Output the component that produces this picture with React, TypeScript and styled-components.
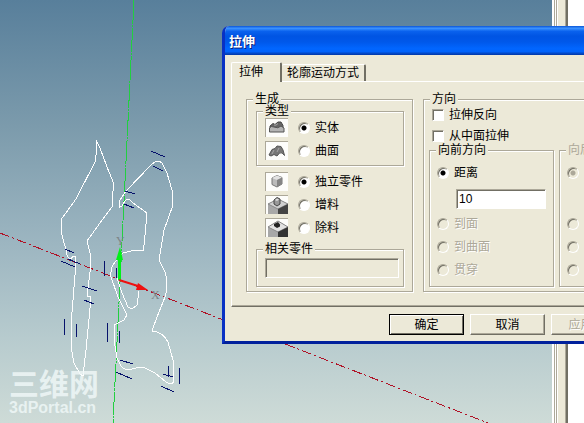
import React from 'react';
import styled, { createGlobalStyle, css } from 'styled-components';

const GlobalStyle = createGlobalStyle`
  *, *::before, *::after { box-sizing: border-box; }
  body {
    margin: 0;
    overflow: hidden;
    color: #000;
    font-family: 'Liberation Sans', 'Noto Sans CJK SC', sans-serif;
    font-size: 12px;
    line-height: 16px;
  }
`;

const face = '#ece9d8';
const shade = '#aca899';
const deep = '#716f64';

const Workspace = styled.main`
  position: relative;
  display: flex;
  min-height: 100vh;
  overflow: hidden;
`;

const Viewport = styled.section`
  position: relative;
  flex: 1;
  min-width: 0;
  background: linear-gradient(#587f9b 0%, #7c9bac 30%, #9db6c1 58%, #b7cbce 80%, #cedbd7 100%);
`;

const Sketch = styled.svg`
  display: block;
  width: 100%;
  height: 100vh;
`;

const Splitter = styled.div`
  width: 16px;
  background: linear-gradient(
    90deg,
    #fff 0 2px, #aca899 2px 3px, #fff 3px 4px, #aca899 4px 5px, #fff 5px 6px,
    ${face} 6px 13px, #aca899 13px 14px, #716f64 14px 16px
  );
`;

const SidePane = styled.aside`
  width: 16px;
  background: #fff;
`;

const Watermark = styled.div`
  position: absolute;
  left: 9px;
  bottom: 6px;
  display: flex;
  flex-direction: column;
  color: rgba(240, 248, 248, 0.82);
  font-weight: 700;
  white-space: nowrap;
`;

const WatermarkName = styled.span`
  font-size: 30px;
  line-height: 28px;
`;

const WatermarkSite = styled.span`
  font-size: 16px;
  line-height: 18px;
`;

const Dialog = styled.div`
  position: absolute;
  left: 222px;
  top: 26px;
  width: 492px;
  border: solid #0831c4;
  border-width: 0 3px 3px;
  border-bottom-color: #00209c;
  border-radius: 7px 7px 0 0;
  overflow: hidden;
  background: ${face};
`;

const TitleBar = styled.header`
  height: 29px;
  margin: 0 -3px;
  padding: 0 7px;
  background: linear-gradient(
    #0a55d8 0%, #3c93ff 8%, #0a62ee 18%, #0054e3 35%, #0058ea 55%, #0166ff 78%, #0163fb 88%, #0347c4 95%, #0137a8 100%
  );
`;

const Title = styled.h1`
  margin: 0;
  color: #fff;
  font-size: 13px;
  line-height: 31px;
  text-shadow: 1px 1px 0 #0a1e7a;
`;

const Content = styled.div`
  padding: 7px 6px 6px;
`;

const TabList = styled.div`
  display: flex;
  align-items: flex-end;
  height: 19px;
`;

const Tab = styled.button<{ $active?: boolean }>`
  height: 17px;
  padding: 0 5px;
  border: solid;
  border-width: 1px 2px 0 0;
  border-color: #fff ${deep} #fff #fff;
  border-radius: 2px 2px 0 0;
  background: ${face};
  color: #000;
  font: inherit;
  line-height: 16px;
  ${(p) => p.$active && css`
    position: relative;
    height: 20px;
    margin-bottom: -1px;
    padding: 0 17px 2px 7px;
    border-left-width: 1px;
  `}
`;

const Panel = styled.div`
  display: flex;
  align-items: stretch;
  gap: 10px;
  padding: 11px 14px 14px;
  border: 1px solid #fff;
  border-bottom-color: ${deep};
  box-shadow: 0 -1px 0 ${shade} inset;
`;

const Group = styled.fieldset<{ $disabled?: boolean }>`
  min-width: 0;
  margin: 0;
  padding: 0;
  border: 1px solid ${shade};
  box-shadow: 1px 1px 0 #fff, inset 1px 1px 0 #fff;
  color: ${(p) => (p.$disabled ? shade : '#000')};
`;

const Legend = styled.legend`
  margin-left: 6px;
  padding: 0 2px;
  background: ${face};
  line-height: 12px;
`;

const GenerateGroup = styled(Group)`
  width: 167px;
`;

const GenerateBody = styled.div`
  display: flex;
  flex-direction: column;
  gap: 6px;
  padding: 0 8px 4px 9px;
`;

const OptionList = styled.div<{ $inset?: boolean }>`
  display: flex;
  flex-direction: column;
  gap: 4px;
  padding: ${(p) => (p.$inset ? '1px 8px 5px' : '0 9px')};
`;

const OptionRow = styled.div`
  display: flex;
  align-items: center;
  gap: 10px;
  height: 19px;
`;

const IconTile = styled.svg`
  flex: none;
  width: 23px;
  height: 19px;
  border: solid;
  border-width: 1px 0 0 1px;
  border-color: ${shade};
  background: #fdfdfb;
`;

const Choice = styled.label<{ $muted?: boolean }>`
  display: flex;
  align-items: center;
  gap: 5px;
  height: 16px;
  color: ${(p) => (p.$muted ? shade : '#000')};
  text-shadow: ${(p) => (p.$muted ? '1px 1px 0 #fff' : 'none')};
  white-space: nowrap;
`;

const Radio = styled.input.attrs({ type: 'radio' })`
  appearance: none;
  flex: none;
  width: 12px;
  height: 12px;
  margin: 0;
  border: 1px solid;
  border-color: ${shade} #fff #fff ${shade};
  border-radius: 50%;
  background: #fff;
  box-shadow: inset 1px 1px 0 ${deep};
  &:checked {
    background: radial-gradient(circle at 5px 5px, #000 0 2px, #fff 3px);
  }
  &:disabled {
    background: ${face};
  }
  &:disabled:checked {
    background: radial-gradient(circle at 5px 5px, ${shade} 0 2px, ${face} 3px);
  }
`;

const Check = styled.input.attrs({ type: 'checkbox' })`
  appearance: none;
  width: 12px;
  height: 12px;
  margin: 0;
  border: 1px solid;
  border-color: ${shade} #fff #fff ${shade};
  background: #fff;
  box-shadow: inset 1px 1px 0 ${deep};
`;

const TextBox = styled.input.attrs({ type: 'text' })`
  display: block;
  width: 100%;
  height: 20px;
  margin: 0;
  padding: 0 2px;
  border: 1px solid;
  border-color: ${shade} #fff #fff ${shade};
  border-radius: 0;
  background: #fff;
  box-shadow: inset 1px 1px 0 ${deep};
  color: #000;
  font: inherit;
  &:disabled { background: ${face}; }
`;

const PartBody = styled.div`
  padding: 3px 4px 8px 8px;
`;

const DirectionGroup = styled(Group)`
  flex: 1;
`;

const DirectionBody = styled.div`
  padding: 2px 5px 4px;
`;

const CheckList = styled.div`
  display: flex;
  flex-direction: column;
  gap: 5px;
  padding-left: 3px;
`;

const Sides = styled.div`
  display: grid;
  grid-template-columns: 125px 125px;
  gap: 5px;
`;

const SideBody = styled.div`
  display: flex;
  flex-direction: column;
  gap: 7px;
  padding: 9px 7px 8px;
`;

const DistanceField = styled.div`
  height: 21px;
  padding: 1px 0 0 19px;
`;

const Footer = styled.footer`
  display: flex;
  gap: 6px;
  padding: 7px 0 0 158px;
`;

const PushButton = styled.button<{ $primary?: boolean }>`
  width: 75px;
  height: 21px;
  padding: 0;
  border: 1px solid;
  border-color: ${(p) => (p.$primary ? '#000' : `#fff ${deep} ${deep} #fff`)};
  border-radius: 0;
  background: ${face};
  box-shadow: ${(p) => (p.$primary ? `inset 1px 1px 0 #fff, inset -1px -1px 0 ${deep}` : `inset -1px -1px 0 ${shade}`)};
  color: #000;
  font: inherit;
  &:disabled {
    color: ${shade};
    text-shadow: 1px 1px 0 #fff;
  }
`;

const SolidIcon = () => (
  <IconTile viewBox="0 0 22 18" aria-hidden="true">
    <path d="M4 12V7L7 4.500L9 5.500L12 3H15L17 6.500V12Z" fill="#666" stroke="#444" />
    <path d="M3.500 9Q5 6.500 8 8Q12 10 15 7L18 9V13H3.500Z" fill="#b4b4b4" stroke="#555" />
    <path d="M8 6Q10 7 12 4.500" fill="none" stroke="#aaa" />
  </IconTile>
);

const SurfaceIcon = () => (
  <IconTile viewBox="0 0 22 18" aria-hidden="true">
    <path d="M3 13L6 7.500L9 6.500L11 4L15 4.500L17 8L18.500 13.500Q16 9.500 13.500 11L11 14L8 12.500L5 14Z" fill="#777" stroke="#555" />
    <path d="M6 12L8 8M13 6L11 10" stroke="#a8a8a8" fill="none" />
  </IconTile>
);

const PartIcon = () => (
  <IconTile viewBox="0 0 22 18" aria-hidden="true">
    <path d="M6 5L11 2.500L16 4.500V11L11 14L6 11.500Z" fill="#bbb" stroke="#777" />
    <path d="M6 5L11 7L16 4.500L11 2.500Z" fill="#e2e2e2" />
    <path d="M11 7L16 4.500V11L11 14Z" fill="#858585" />
  </IconTile>
);

const AddIcon = () => (
  <IconTile viewBox="0 0 22 18" aria-hidden="true">
    <path d="M2 8L12 3L22 8V18H2Z" fill="#a8a8a8" />
    <path d="M2 8L12 13L22 8L12 3Z" fill="#d0d0d0" stroke="#888" />
    <path d="M12 13L22 8V18H12Z" fill="#444" />
    <path d="M8 4L11 1.500L14 3V8L11 10L8 8Z" fill="#999" stroke="#444" />
    <path d="M9 4L11 5L13 3.500L11 2.500Z" fill="#ddd" />
  </IconTile>
);

const RemoveIcon = () => (
  <IconTile viewBox="0 0 22 18" aria-hidden="true">
    <path d="M2 8L12 2L22 8V18H2Z" fill="#a8a8a8" />
    <path d="M2 8L12 13L22 8L12 2Z" fill="#e2e2e2" stroke="#888" />
    <path d="M12 13L22 8V18H12Z" fill="#333" />
    <path d="M8 5L12 3L14 5.500V7.500L11 9L8 7Z" fill="#222" />
  </IconTile>
);

const constraintMarks = [
  'M151 151L165 157', 'M153 166L163 171', 'M125 191L135 194', 'M124 204L134 208',
  'M65 249L74 253', 'M68 259L80 264', 'M61 261L75 267', 'M104.500 261V276', 'M116.500 268V278',
  'M82 286L97 291', 'M84 300L94 304', 'M65 319L64 335', 'M76.500 324V337', 'M108 323L107 342',
  'M119.500 331V343', 'M120 360L133 364', 'M116 372L132 379', 'M168.500 366V377',
  'M163 374L173 377', 'M180 368L179 384', 'M161 386L174 392',
];

const SketchView = () => (
  <Sketch role="img" aria-label="草图">
    <g shapeRendering="crispEdges">
      <line x1="134" y1="0" x2="113" y2="423" stroke="#22cf40" strokeDasharray="24 1 2 1" />
      <line x1="0" y1="233" x2="488" y2="423" stroke="#b01226" strokeDasharray="10 3 2 3" />
      <g fill="none" stroke="#fff" strokeLinejoin="round">
        <path d="M96 140L97 148L95 162L76 199L61.500 219L62 235L66 250Q67 259 71 259Q74 254 76 258L75 275L71 325V347L74 363L80 374L83 376L86 350L90.500 303V297L87 296L90 272V253L87 241L100 223L112 207L113.500 183L107 167L100 148Z" />
        <path d="M120 200L126 191L152 164Q158 159 162 163L167 173L172 190L173 205L164 230L159 260L165 272Q169 285 165 297L157 317L152 331Q163 332 168 342L173 360L174 382Q171 385 166 382L155 373L145 368Q138 367 132 369Q125 371 121 366L117 358L114 340V325L124 320L127 315L118 297L111 277Q110 268 115 262L123 253L133 250.500L143.500 251L147 213L133 203L129 199Q125 199 122 206L119.500 207Z" />
        <path d="M117 278L122 293L128 307L132 309L137 305L139 291" />
      </g>
      <path d={constraintMarks.join('')} fill="none" stroke="#06126b" />
    </g>
    <path d="M119.500 280V258" stroke="#00f018" strokeWidth="3" />
    <path d="M116 260L120 247L123 260Z" fill="#00f018" />
    <path d="M119 280L138 286" stroke="#ee1010" strokeWidth="2" />
    <path d="M138 283L148 290L136 290Z" fill="#ee1010" />
    <g fill="#7d8588" fontFamily="Liberation Serif, serif" fontSize="12">
      <text x="116" y="245">Y</text>
      <text x="151" y="299">X</text>
    </g>
  </Sketch>
);

type Option = { label: string; Icon: React.ComponentType };

const typeOptions: Option[] = [
  { label: '实体', Icon: SolidIcon },
  { label: '曲面', Icon: SurfaceIcon },
];

const modeOptions: Option[] = [
  { label: '独立零件', Icon: PartIcon },
  { label: '增料', Icon: AddIcon },
  { label: '除料', Icon: RemoveIcon },
];

const IconOptions = ({ name, items, inset }: { name: string; items: Option[]; inset?: boolean }) => (
  <OptionList $inset={inset}>
    {items.map(({ label, Icon }, i) => (
      <OptionRow key={label}>
        <Icon />
        <Choice>
          <Radio name={name} defaultChecked={i === 0} />
          {label}
        </Choice>
      </OptionRow>
    ))}
  </OptionList>
);

const App = () => (
  <>
    <GlobalStyle />
    <Workspace>
      <Viewport>
        <SketchView />
        <Watermark>
          <WatermarkName>三维网</WatermarkName>
          <WatermarkSite>3dPortal.cn</WatermarkSite>
        </Watermark>
      </Viewport>
      <Splitter />
      <SidePane />
      <Dialog role="dialog" aria-labelledby="dialog-title">
        <TitleBar>
          <Title id="dialog-title">拉伸</Title>
        </TitleBar>
        <Content>
          <TabList role="tablist">
            <Tab role="tab" aria-selected="true" $active>拉伸</Tab>
            <Tab role="tab" aria-selected="false">轮廓运动方式</Tab>
          </TabList>
          <Panel role="tabpanel">
            <GenerateGroup>
              <Legend>生成</Legend>
              <GenerateBody>
                <Group>
                  <Legend>类型</Legend>
                  <IconOptions name="type" items={typeOptions} inset />
                </Group>
                <IconOptions name="mode" items={modeOptions} />
                <Group>
                  <Legend>相关零件</Legend>
                  <PartBody>
                    <TextBox aria-label="相关零件" disabled />
                  </PartBody>
                </Group>
              </GenerateBody>
            </GenerateGroup>
            <DirectionGroup>
              <Legend>方向</Legend>
              <DirectionBody>
                <CheckList>
                  <Choice><Check />拉伸反向</Choice>
                  <Choice><Check />从中面拉伸</Choice>
                </CheckList>
                <Sides>
                  <Group>
                    <Legend>向前方向</Legend>
                    <SideBody>
                      <Choice><Radio name="forward" defaultChecked />距离</Choice>
                      <DistanceField>
                        <TextBox aria-label="距离" defaultValue="10" />
                      </DistanceField>
                      <Choice $muted><Radio name="forward" disabled />到面</Choice>
                      <Choice $muted><Radio name="forward" disabled />到曲面</Choice>
                      <Choice $muted><Radio name="forward" disabled />贯穿</Choice>
                    </SideBody>
                  </Group>
                  <Group $disabled>
                    <Legend>向后方向</Legend>
                    <SideBody>
                      <Choice $muted><Radio name="backward" aria-label="距离" disabled defaultChecked /></Choice>
                      <DistanceField />
                      <Choice $muted><Radio name="backward" aria-label="到面" disabled /></Choice>
                      <Choice $muted><Radio name="backward" aria-label="到曲面" disabled /></Choice>
                      <Choice $muted><Radio name="backward" aria-label="贯穿" disabled /></Choice>
                    </SideBody>
                  </Group>
                </Sides>
              </DirectionBody>
            </DirectionGroup>
          </Panel>
          <Footer>
            <PushButton $primary>确定</PushButton>
            <PushButton>取消</PushButton>
            <PushButton disabled>应用(A)</PushButton>
          </Footer>
        </Content>
      </Dialog>
    </Workspace>
  </>
);

export default App;
